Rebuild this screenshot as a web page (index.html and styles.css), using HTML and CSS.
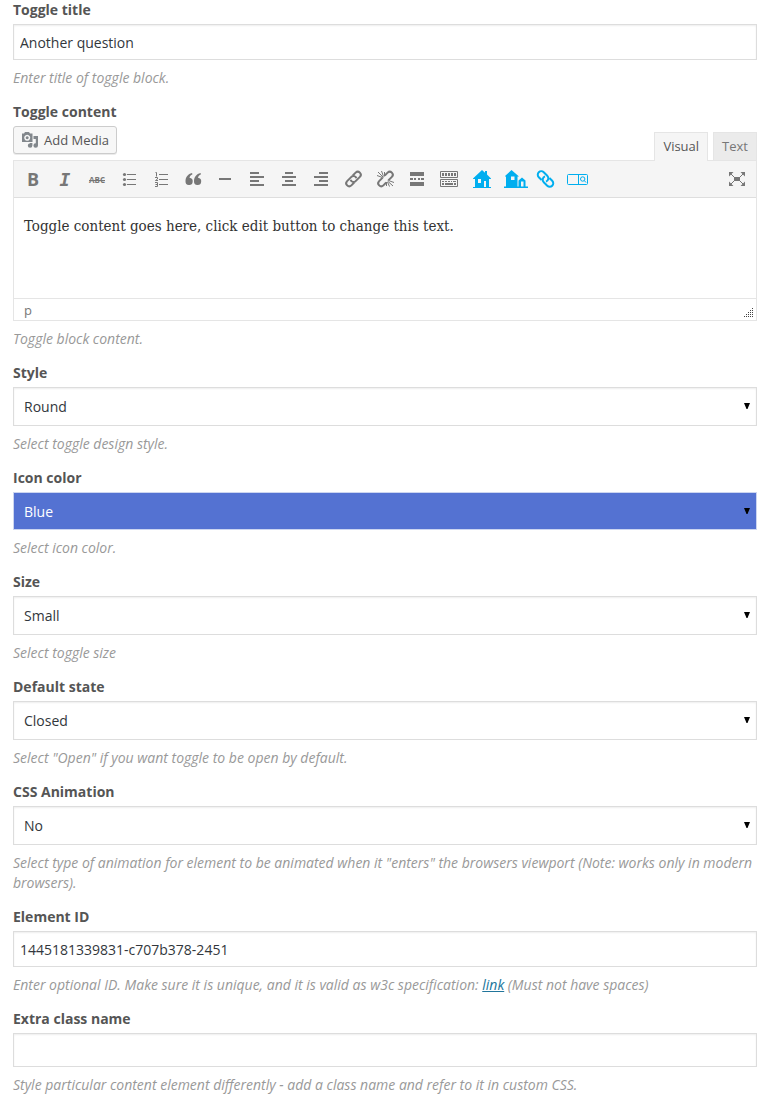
FILE: index.html
```html
<!DOCTYPE html>
<html lang="en">
<head>
    <meta charset="UTF-8">
    <meta name="viewport" content="width=device-width, initial-scale=1.0">
    <title>Toggle settings</title>
    <link rel="stylesheet" href="styles.css">
</head>
<body>
    <form class="settings">
        <div class="field">
            <label for="title">Toggle title</label>
            <input type="text" id="title" class="control" value="Another question">
            <p class="description">Enter title of toggle block.</p>
        </div>

        <div class="field">
            <label for="content">Toggle content</label>
            <div class="editor-tools">
                <button type="button" class="media-button">
                    <svg class="media-icon" viewBox="0 0 18 18" width="18" height="18">
                        <path fill-rule="evenodd" d="M1 2.500h2L4 1h4l1 1.500h2.500V11H1zM6.200 3.700a3 3 0 1 0 .01 0zM6.200 5.200a1.500 1.500 0 1 1-.01 0z"/>
                        <path d="M12.500 5H17v9.500a2.300 2.300 0 1 1-2.200-2.300V8h-2.300z"/>
                        <path d="M9 12h2.400v2.500a2.300 2.300 0 1 1-2.400-2.300z"/>
                    </svg>
                    Add Media
                </button>
                <div class="tabs">
                    <button type="button" class="tab active">Visual</button>
                    <button type="button" class="tab">Text</button>
                </div>
            </div>
            <div class="editor">
                <div class="toolbar">
                    <button type="button" class="tool bold" aria-label="Bold">B</button>
                    <button type="button" class="tool italic" aria-label="Italic">I</button>
                    <button type="button" class="tool strike" aria-label="Strikethrough">ABC</button>
                    <button type="button" class="tool" aria-label="Bulleted list">
                        <svg viewBox="0 0 24 24">
                            <circle cx="7.500" cy="7.500" r="1.600"/><circle cx="7.500" cy="12.500" r="1.600"/><circle cx="7.500" cy="17.500" r="1.600"/>
                            <path d="M10 7h9v1h-9zM10 12h9v1h-9zM10 17h9v1h-9z"/>
                        </svg>
                    </button>
                    <button type="button" class="tool" aria-label="Numbered list">
                        <svg viewBox="0 0 24 24">
                            <path class="thin" d="M6.500 5.500h1v4M6 10.500h2.500v1.500l-2 1.500h2.500M6 15.500h2.500v4H6M6.500 17.500h2"/>
                            <path d="M10 7h9v1h-9zM10 12h9v1h-9zM10 17h9v1h-9z"/>
                        </svg>
                    </button>
                    <button type="button" class="tool" aria-label="Blockquote">
                        <svg viewBox="0 0 24 24">
                            <path d="M11 6C7 7 4.500 10 4.500 14.200A3.600 3.600 0 1 0 8.500 10.800C8.700 9.200 9.700 8 11.500 7.200zM19.500 6C15.500 7 13 10 13 14.200A3.600 3.600 0 1 0 17 10.800C17.200 9.200 18.200 8 20 7.200z"/>
                        </svg>
                    </button>
                    <button type="button" class="tool" aria-label="Horizontal line">
                        <svg viewBox="0 0 24 24"><path d="M6 11h12v2H6z"/></svg>
                    </button>
                    <button type="button" class="tool" aria-label="Align left">
                        <svg viewBox="0 0 24 24"><path d="M5 5h9v2H5zM5 9h14v2H5zM5 13h9v2H5zM5 17h14v2H5z"/></svg>
                    </button>
                    <button type="button" class="tool" aria-label="Align center">
                        <svg viewBox="0 0 24 24"><path d="M8 5h8v2H8zM5 9h14v2H5zM8 13h8v2H8zM5 17h14v2H5z"/></svg>
                    </button>
                    <button type="button" class="tool" aria-label="Align right">
                        <svg viewBox="0 0 24 24"><path d="M10 5h9v2h-9zM5 9h14v2H5zM10 13h9v2h-9zM5 17h14v2H5z"/></svg>
                    </button>
                    <button type="button" class="tool" aria-label="Insert link">
                        <svg viewBox="0 0 24 24">
                            <g class="line" transform="rotate(-45 12.500 12)">
                                <path d="M10.500 15H6.500a3 3 0 0 1 0-6h6a3 3 0 0 1 2.600 4.500"/>
                                <path d="M14.500 9h4a3 3 0 0 1 0 6h-6a3 3 0 0 1-2.600-4.500"/>
                            </g>
                        </svg>
                    </button>
                    <button type="button" class="tool" aria-label="Remove link">
                        <svg viewBox="0 0 24 24">
                            <g class="line" transform="rotate(-45 12.500 12)">
                                <path d="M10.500 15H6.500a3 3 0 0 1 0-6H11.500"/>
                                <path d="M14.500 9h4a3 3 0 0 1 0 6H13.500"/>
                            </g>
                            <path class="thin" d="M10.500 10.500L5 5M10.500 9.500L8.500 4M9.500 10.500L4 8.500M11.500 9.500V5M14.500 14L20 19M14.500 15l2 4.500M15.500 13.500l5.500 2M13.500 15V19"/>
                        </svg>
                    </button>
                    <button type="button" class="tool" aria-label="Read more">
                        <svg viewBox="0 0 24 24"><path d="M5 5h14v4H5zM5 11h3v2H5zM9 11h2v2H9zM13 11h2v2h-2zM16 11h3v2h-3zM5 15h14v4H5z"/></svg>
                    </button>
                    <button type="button" class="tool" aria-label="Toolbar toggle">
                        <svg viewBox="0 0 24 24">
                            <path class="thin" d="M3.500 4.500h17v6h-17zM3.500 12.500h17v7h-17z"/>
                            <path d="M5 6h2v3H5zM8 6h2v3H8zM11 6h2v3h-2zM14 6h2v3h-2zM17 6h2v3h-2zM5 14h2v1H5zM8 14h2v1H8zM11 14h2v1h-2zM14 14h1v1h-1zM16 14h3v1h-3zM5 16h2v2H5zM8 16h8v2H8zM17 16h2v2h-2z"/>
                        </svg>
                    </button>
                    <button type="button" class="tool blue" aria-label="Add property">
                        <svg viewBox="0 0 24 24">
                            <path fill-rule="evenodd" d="M13 3l3 2.800V4h2v3.500l4 4V12h-2v8h2v1H4v-1h2v-8H4v-.500zM9 12v4h3v-4zM15 14v6h2v-6z"/>
                        </svg>
                    </button>
                    <button type="button" class="tool blue" aria-label="Add properties">
                        <svg viewBox="0 0 24 24">
                            <path fill-rule="evenodd" d="M10.500 3l7.500 6.500h-1.500v10h1v-6l3.500-3 3.500 3v6H27V21H3v-1.500h2v-10H4V9zM10 9.500v3.500h3.500V9.500zM20 14.500v5h2.500v-5z"/>
                        </svg>
                    </button>
                    <button type="button" class="tool blue" aria-label="Property link">
                        <svg viewBox="0 0 24 24">
                            <g class="line" transform="rotate(45 12.500 12)">
                                <path d="M10.500 15.500H6.500a3.500 3.500 0 0 1 0-7h5a3.500 3.500 0 0 1 3.200 5"/>
                                <path d="M14.500 8.500h4a3.500 3.500 0 0 1 0 7h-5a3.500 3.500 0 0 1-3.200-5"/>
                            </g>
                        </svg>
                    </button>
                    <button type="button" class="tool blue" aria-label="Property search">
                        <svg viewBox="0 0 24 24">
                            <rect class="thin" x="2.500" y="7.500" width="20" height="10" rx="1"/>
                            <path d="M13 7h1v11h-1z"/>
                            <circle class="thin" cx="17.700" cy="12" r="2.200"/>
                            <path class="thin" d="M19.300 13.600l1.700 1.900"/>
                        </svg>
                    </button>
                    <button type="button" class="tool fullscreen" aria-label="Distraction-free writing">
                        <svg viewBox="0 0 24 24">
                            <path d="M9 10h6v4H9zM4 5h4.500L4 9.500zM20 5v4.500L15.500 5zM4 19v-4.500L8.500 19zM20 19h-4.500l4.500-4.500z"/>
                            <path class="thin" d="M5 6l4 4M19 6l-4 4M5 18l4-4M19 18l-4-4"/>
                        </svg>
                    </button>
                </div>
                <div class="editor-body" id="content" contenteditable="true" role="textbox" aria-label="Toggle content">
                    <p>Toggle content goes here, click edit button to change this text.</p>
                </div>
                <div class="statusbar">
                    <span>p</span>
                    <svg class="resize" viewBox="0 0 10 10" width="10" height="10">
                        <path d="M8 0h1v1h-1zM6 2h1v1h-1zM8 2h1v1h-1zM4 4h1v1h-1zM6 4h1v1h-1zM8 4h1v1h-1zM2 6h1v1h-1zM4 6h1v1h-1zM6 6h1v1h-1zM8 6h1v1h-1zM0 8h1v1h-1zM2 8h1v1h-1zM4 8h1v1h-1zM6 8h1v1h-1zM8 8h1v1h-1z"/>
                    </svg>
                </div>
            </div>
            <p class="description">Toggle block content.</p>
        </div>

        <div class="field">
            <label for="style">Style</label>
            <select id="style" class="control">
                <option>Round</option>
            </select>
            <p class="description">Select toggle design style.</p>
        </div>

        <div class="field">
            <label for="color">Icon color</label>
            <select id="color" class="control color-blue">
                <option>Blue</option>
            </select>
            <p class="description">Select icon color.</p>
        </div>

        <div class="field">
            <label for="size">Size</label>
            <select id="size" class="control">
                <option>Small</option>
            </select>
            <p class="description">Select toggle size</p>
        </div>

        <div class="field">
            <label for="state">Default state</label>
            <select id="state" class="control">
                <option>Closed</option>
                <option>Open</option>
            </select>
            <p class="description">Select "Open" if you want toggle to be open by default.</p>
        </div>

        <div class="field">
            <label for="animation">CSS Animation</label>
            <select id="animation" class="control">
                <option>No</option>
            </select>
            <p class="description">Select type of animation for element to be animated when it "enters" the browsers viewport (Note: works only in modern browsers).</p>
        </div>

        <div class="field">
            <label for="elementId">Element ID</label>
            <input type="text" id="elementId" class="control" value="1445181339831-c707b378-2451">
            <p class="description">Enter optional ID. Make sure it is unique, and it is valid as w3c specification: <a href="#">link</a> (Must not have spaces)</p>
        </div>

        <div class="field">
            <label for="extraClass">Extra class name</label>
            <input type="text" id="extraClass" class="control short">
            <p class="description">Style particular content element differently - add a class name and refer to it in custom CSS.</p>
        </div>
    </form>
</body>
</html>
```

FILE: styles.css
```css
body {
    margin: 0;
    padding: 0 14px 16px 13px;
    background: #fff;
    color: #555;
    font-family: "Open Sans", sans-serif;
    font-size: 14px;
    line-height: 20px;
}
p {
    margin: 0;
}
.settings {
    display: flex;
    flex-direction: column;
    gap: 14px;
}
.field label {
    display: block;
    margin-bottom: 4px;
    font-weight: bold;
}
.description {
    margin-top: 8px;
    color: #999;
    font-style: italic;
}
.description a {
    color: #21759b;
}

/* inputs and selects */
.control {
    display: block;
    box-sizing: border-box;
    width: 100%;
    height: 36px;
    margin: 0;
    padding: 0 6px;
    border: 1px solid #ddd;
    border-radius: 0;
    background-color: #fff;
    box-shadow: inset 0 1px 2px rgba(0, 0, 0, 0.07);
    color: #32373c;
    font-family: inherit;
    font-size: 14px;
}
.short {
    height: 34px;
}
select.control {
    height: 39px;
    padding: 0 10px;
    appearance: none;
    background-image: url("data:image/svg+xml,%3Csvg xmlns='http://www.w3.org/2000/svg' width='6' height='6'%3E%3Cpath d='M0 0h6L3.500 6h-1z'/%3E%3C/svg%3E");
    background-repeat: no-repeat;
    background-position: right 6px top 15px;
}
select.color-blue {
    height: 38px;
    border-color: #ccd5f0;
    background-color: #5472d2;
    box-shadow: none;
    color: #fff;
}

/* editor */
.editor-tools {
    display: flex;
    justify-content: space-between;
    align-items: flex-start;
    height: 34px;
}
.media-button {
    display: flex;
    align-items: center;
    gap: 5px;
    height: 28px;
    padding: 0 7px;
    border: 1px solid #ccc;
    border-radius: 3px;
    background: #f7f7f7;
    box-shadow: 0 1px 0 rgba(0, 0, 0, 0.08);
    color: #555;
    font-family: inherit;
    font-size: 13px;
}
.media-icon {
    fill: #82878c;
}
.tabs {
    display: flex;
    align-self: flex-end;
    gap: 5px;
}
.tab {
    position: relative;
    height: 28px;
    padding: 0 8px 2px;
    border: 1px solid #e5e5e5;
    border-bottom: none;
    background: #ebebeb;
    color: #777;
    font-family: inherit;
    font-size: 13px;
}
.tab.active {
    height: 29px;
    margin-bottom: -1px;
    background: #f5f5f5;
    color: #555;
}
.editor {
    border: 1px solid #e5e5e5;
}
.toolbar {
    display: flex;
    align-items: center;
    height: 36px;
    padding: 0 3px;
    border-bottom: 1px solid #dedede;
    background: #f5f5f5;
}
.tool {
    display: flex;
    align-items: center;
    justify-content: center;
    flex: none;
    width: 32px;
    height: 24px;
    padding: 0;
    border: none;
    background: none;
    color: #777;
    font-family: inherit;
    font-weight: bold;
}
.tool svg {
    width: 24px;
    height: 24px;
    overflow: visible;
    fill: currentColor;
}
.tool .line,
.tool .thin {
    fill: none;
    stroke: currentColor;
    stroke-width: 2;
}
.tool .thin {
    stroke-width: 1;
}
.bold {
    font-size: 18px;
}
.italic {
    font-family: "DejaVu Sans Mono", monospace;
    font-size: 18px;
    font-style: italic;
}
.strike {
    font-size: 8px;
    text-decoration: line-through;
}
.blue {
    color: #00aeef;
}
.fullscreen {
    margin-left: auto;
}
.editor-body {
    box-sizing: border-box;
    height: 100px;
    padding: 18px 10px;
    color: #333;
    font-family: Georgia, "DejaVu Serif Condensed", "Liberation Serif", serif;
    font-size: 15px;
}
.statusbar {
    display: flex;
    justify-content: space-between;
    align-items: center;
    height: 21px;
    padding: 0 2px 0 10px;
    border-top: 1px solid #e5e5e5;
    color: #777;
    font-size: 13px;
}
.resize {
    align-self: flex-end;
    margin-bottom: 2px;
    fill: #444;
}
```
